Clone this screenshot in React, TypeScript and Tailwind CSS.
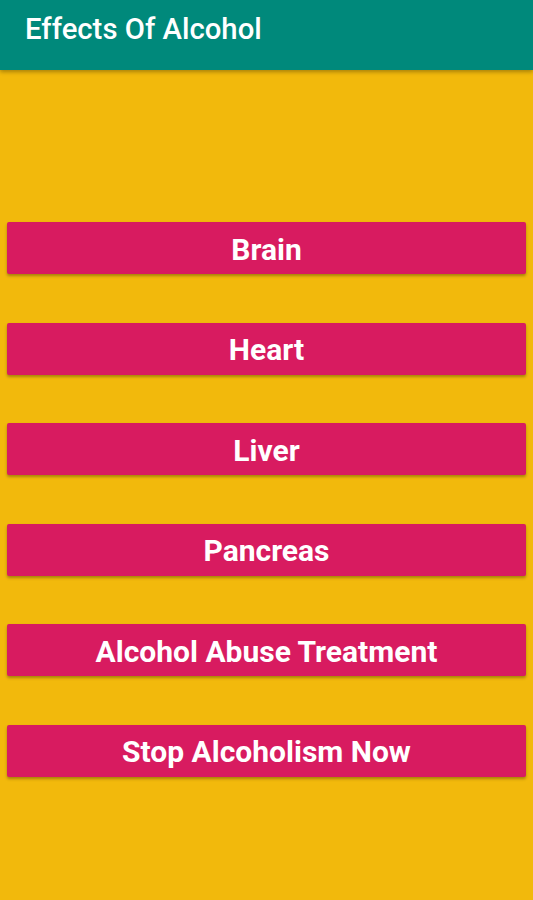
const items = [
  "Brain",
  "Heart",
  "Liver",
  "Pancreas",
  "Alcohol Abuse Treatment",
  "Stop Alcoholism Now"
]

export default function App() {
  return (
    <div className="flex h-[900px] w-[533px] flex-col bg-[#f2b90c] font-['Roboto',sans-serif]">
      <div className="z-10 flex h-[70px] shrink-0 items-center bg-[#00897b] px-[25px] pb-[10px] shadow-[0_2px_4px_rgba(0,0,0,0.3)]">
        <h1 className="text-[29.3px] font-medium text-white">Effects Of Alcohol</h1>
      </div>
      <div className="flex flex-col gap-[48.6px] px-[7px] pt-[152px]">
        {items.map((item) => (
          <button
            key={item}
            className="flex h-[52px] items-center justify-center rounded-[2px] bg-[#d81b60] pt-[2px] text-[30px] font-bold text-white shadow-[0_2px_3px_rgba(0,0,0,0.3)]"
          >
            {item}
          </button>
        ))}
      </div>
    </div>
  )
}
